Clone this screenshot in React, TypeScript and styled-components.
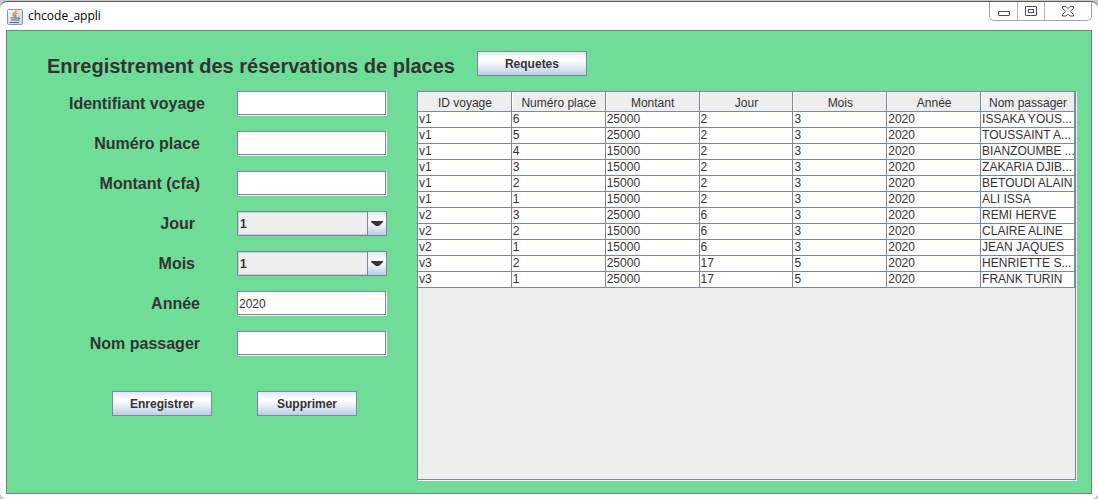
import React from "react";
import styled, { createGlobalStyle } from "styled-components";

const line = "#7a8a99";
const ink = "#333333";
const steel = "linear-gradient(#dde8f3 0%, #ffffff 30%, #ffffff 38%, #b8cfe5 100%)";

const GlobalStyle = createGlobalStyle`
  * { box-sizing: border-box; }
  html, body, #root { height: 100%; }
  body {
    margin: 0;
    background: #c8c8c8;
    color: ${ink};
    font: 12px/16px "Liberation Sans", Arial, sans-serif;
  }
  #root {
    display: flex;
    flex-direction: column;
    padding-top: 1px;
  }
`;

const Window = styled.div`
  flex: 1;
  display: flex;
  flex-direction: column;
  padding: 0 6px 5px 6px;
  background: #ffffff;
  border-top: 1px solid #5c5c5c;
  border-radius: 7px;
`;

const TitleBar = styled.header`
  display: flex;
  align-items: flex-start;
  height: 28px;
`;

const Title = styled.h1`
  flex: 1;
  display: flex;
  align-items: center;
  gap: 5px;
  height: 28px;
  margin: 0;
  color: #000000;
  font: 12px/16px "Open Sans", "Noto Sans", sans-serif;
`;

const WindowControls = styled.div`
  display: flex;
  height: 19px;
  border: 1px solid #a3a3a3;
  border-top: 0;
  border-radius: 0 0 5px 5px;
`;

const ControlButton = styled.button<{ $wide?: boolean }>`
  display: flex;
  align-items: center;
  justify-content: center;
  width: ${(p) => (p.$wide ? 47 : 27)}px;
  padding: 0;
  border: 0;
  background: none;
  & + & { border-left: 1px solid #b5b5b5; }
`;

const Panel = styled.main`
  flex: 1;
  display: flex;
  flex-direction: column;
  padding: 20px 14px 12px 40px;
  background: #6fdc97;
  border: 1px solid #7f7f7f;
`;

const Heading = styled.div`
  display: flex;
  gap: 22px;
  height: 40px;
`;

const HeadingText = styled.h2`
  margin: 0;
  font-size: 20px;
  line-height: 30px;
  white-space: nowrap;
`;

const Content = styled.div`
  flex: 1;
  display: flex;
  gap: 30px;
`;

const Form = styled.form`
  flex: none;
  width: 340px;
`;

const Field = styled.div`
  display: grid;
  grid-template-columns: 158px 150px;
  gap: 32px;
  align-items: center;
  height: 25px;
  margin-bottom: 15px;
`;

const Label = styled.label<{ $inset?: number }>`
  padding-right: ${(p) => p.$inset ?? 5}px;
  font-size: 16px;
  line-height: 20px;
  font-weight: bold;
  text-align: right;
`;

const TextInput = styled.input`
  width: 100%;
  height: 25px;
  padding: 0 1px;
  border: 1px solid ${line};
  border-right-color: #ffffff;
  border-bottom-color: #ffffff;
  border-radius: 0;
  box-shadow: inset -1px -1px ${line};
  outline: 0;
  background: #ffffff;
  color: ${ink};
  font: inherit;
`;

const SelectBox = styled.div`
  position: relative;
  display: flex;
  height: 25px;
`;

const Select = styled.select`
  appearance: none;
  width: 100%;
  height: 25px;
  padding: 0 20px 0 2px;
  border: 1px solid ${line};
  border-radius: 0;
  box-shadow: inset 0 0 0 1px #b8cfe5;
  outline: 0;
  background: #eeeeee;
  color: ${ink};
  font: bold 12px/16px "Liberation Sans", Arial, sans-serif;
`;

const SelectArrow = styled.span`
  position: absolute;
  top: 0;
  right: 0;
  display: flex;
  align-items: center;
  justify-content: center;
  width: 20px;
  height: 25px;
  border: 1px solid ${line};
  background: ${steel};
  pointer-events: none;
`;

const Button = styled.button<{ $wide?: boolean }>`
  width: ${(p) => (p.$wide ? 110 : 100)}px;
  height: 25px;
  padding: 0;
  border: 1px solid ${line};
  border-radius: 0;
  background: ${steel};
  color: ${ink};
  font: bold 12px/16px "Liberation Sans", Arial, sans-serif;
`;

const Actions = styled.div`
  display: flex;
  justify-content: center;
  gap: 45px;
  padding: 20px 30px 0 65px;
`;

const TablePane = styled.section`
  flex: 1;
  min-width: 0;
  padding-right: 1px;
  border: 1px solid ${line};
  border-right-color: #ffffff;
  border-bottom-color: #ffffff;
  box-shadow: inset -1px -1px ${line};
  background: #eeeeee;
`;

const Table = styled.table`
  width: 100%;
  table-layout: fixed;
  border-collapse: separate;
  border-spacing: 0;
`;

const HeaderCell = styled.th`
  height: 20px;
  padding: 2px 0 0 1px;
  border-right: 1px solid ${line};
  border-bottom: 1px solid ${line};
  box-shadow: inset 1px 1px #ffffff;
  font-weight: normal;
  line-height: 16px;
  text-align: center;
  white-space: nowrap;
`;

const Cell = styled.td`
  height: 16px;
  padding: 0 0 0 1px;
  overflow: hidden;
  border-right: 1px solid ${line};
  border-bottom: 1px solid ${line};
  background: #ffffff;
  line-height: 15px;
  white-space: nowrap;
`;

const columns = ["ID voyage", "Numéro place", "Montant", "Jour", "Mois", "Année", "Nom passager"];

const rows = [
  ["v1", "6", "25000", "2", "3", "2020", "ISSAKA YOUS..."],
  ["v1", "5", "25000", "2", "3", "2020", "TOUSSAINT A..."],
  ["v1", "4", "15000", "2", "3", "2020", "BIANZOUMBE ..."],
  ["v1", "3", "15000", "2", "3", "2020", "ZAKARIA DJIB..."],
  ["v1", "2", "15000", "2", "3", "2020", "BETOUDI ALAIN"],
  ["v1", "1", "15000", "2", "3", "2020", "ALI ISSA"],
  ["v2", "3", "25000", "6", "3", "2020", "REMI HERVE"],
  ["v2", "2", "15000", "6", "3", "2020", "CLAIRE ALINE"],
  ["v2", "1", "15000", "6", "3", "2020", "JEAN JAQUES"],
  ["v3", "2", "25000", "17", "5", "2020", "HENRIETTE S..."],
  ["v3", "1", "25000", "17", "5", "2020", "FRANK TURIN"],
];

function JavaIcon() {
  return (
    <svg width="17" height="17" viewBox="0 0 17 17" fill="none" aria-hidden="true">
      <defs>
        <linearGradient id="tile" x1="0" y1="0" x2="1" y2="1">
          <stop offset="0" stopColor="#f6f6f4" />
          <stop offset="1" stopColor="#c3d0dd" />
        </linearGradient>
      </defs>
      <rect x="1.5" y="1.5" width="15" height="15" rx="1" fill="url(#tile)" stroke="#8499ad" />
      <path d="M10 2.500c1 2-4 3-3 4.500l2 2M11.500 5c-2 .7-3 1.500-2 2.500s0 1.500-.5 2" stroke="#ee7a22" strokeWidth="1.300" />
      <path d="M4.500 10h7M5 12h6M11.500 10c2.500-.8 2.500 2-.5 2.500M3.500 14.500h9.500" stroke="#44729c" strokeWidth="1.200" />
    </svg>
  );
}

function NumberSelect({ id, count }: { id: string; count: number }) {
  return (
    <SelectBox>
      <Select id={id} defaultValue="1">
        {Array.from({ length: count }, (_, i) => (
          <option key={i}>{i + 1}</option>
        ))}
      </Select>
      <SelectArrow>
        <svg width="12" height="6" viewBox="0 0 12 6" aria-hidden="true">
          <path d="M0 0h12v1L8 5H5L0 1z" fill={ink} />
        </svg>
      </SelectArrow>
    </SelectBox>
  );
}

export default function App() {
  return (
    <>
      <GlobalStyle />
      <Window>
        <TitleBar>
          <Title>
            <JavaIcon />
            chcode_appli
          </Title>
          <WindowControls>
            <ControlButton aria-label="Réduire">
              <svg width="12" height="10" viewBox="0 0 12 10" fill="#fff" stroke="#4a4f60">
                <rect x=".5" y="5.500" width="11" height="4" rx=".5" />
              </svg>
            </ControlButton>
            <ControlButton aria-label="Agrandir">
              <svg width="12" height="10" viewBox="0 0 12 10" fill="#fff" stroke="#4a4f60">
                <rect x=".5" y=".5" width="11" height="9" rx=".5" />
                <rect x="3.500" y="3.500" width="5" height="3" />
              </svg>
            </ControlButton>
            <ControlButton $wide aria-label="Fermer">
              <svg width="12" height="11" viewBox="0 0 12 11" fill="#fff" stroke="#4a4f60">
                <path d="M.5.5h3.500l2 2 2-2h3.500v1.500L8.500 5.500l3 3v1.500H8l-2-2-2 2H.5V8.500l3-3-3-3.500z" />
              </svg>
            </ControlButton>
          </WindowControls>
        </TitleBar>
        <Panel>
          <Heading>
            <HeadingText>Enregistrement des réservations de places</HeadingText>
            <Button type="button" $wide>Requetes</Button>
          </Heading>
          <Content>
            <Form onSubmit={(e) => e.preventDefault()}>
              <Field>
                <Label htmlFor="voyage" $inset={0}>Identifiant voyage</Label>
                <TextInput id="voyage" />
              </Field>
              <Field>
                <Label htmlFor="place">Numéro place</Label>
                <TextInput id="place" />
              </Field>
              <Field>
                <Label htmlFor="montant">Montant (cfa)</Label>
                <TextInput id="montant" />
              </Field>
              <Field>
                <Label htmlFor="jour" $inset={10}>Jour</Label>
                <NumberSelect id="jour" count={31} />
              </Field>
              <Field>
                <Label htmlFor="mois" $inset={10}>Mois</Label>
                <NumberSelect id="mois" count={12} />
              </Field>
              <Field>
                <Label htmlFor="annee">Année</Label>
                <TextInput id="annee" defaultValue="2020" />
              </Field>
              <Field>
                <Label htmlFor="passager">Nom passager</Label>
                <TextInput id="passager" />
              </Field>
              <Actions>
                <Button type="submit">Enregistrer</Button>
                <Button type="button">Supprimer</Button>
              </Actions>
            </Form>
            <TablePane>
              <Table>
                <thead>
                  <tr>
                    {columns.map((c) => (
                      <HeaderCell key={c} scope="col">{c}</HeaderCell>
                    ))}
                  </tr>
                </thead>
                <tbody>
                  {rows.map((row) => (
                    <tr key={row[0] + row[1]}>
                      {row.map((value, i) => (
                        <Cell key={i}>{value}</Cell>
                      ))}
                    </tr>
                  ))}
                </tbody>
              </Table>
            </TablePane>
          </Content>
        </Panel>
      </Window>
    </>
  );
}
